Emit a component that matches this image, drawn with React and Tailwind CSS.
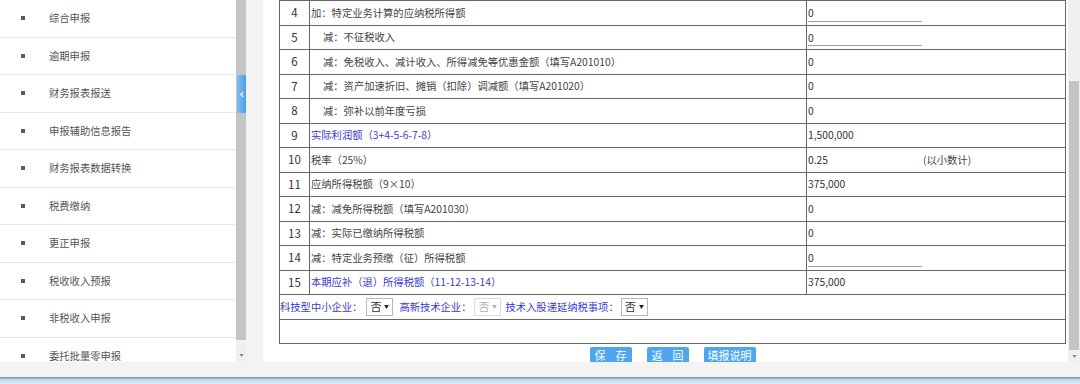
import React from "react";

const MENU = [
  "综合申报",
  "逾期申报",
  "财务报表报送",
  "申报辅助信息报告",
  "财务报表数据转换",
  "税费缴纳",
  "更正申报",
  "税收收入预报",
  "非税收入申报",
  "委托批量零申报",
];

const ROWS = [
  { n: 4, label: "加：特定业务计算的应纳税所得额", val: "0", input: true },
  { n: 5, label: "减：不征税收入", indent: true, val: "0", input: true },
  { n: 6, label: "减：免税收入、减计收入、所得减免等优惠金额（填写A201010）", indent: true, val: "0" },
  { n: 7, label: "减：资产加速折旧、摊销（扣除）调减额（填写A201020）", indent: true, val: "0" },
  { n: 8, label: "减：弥补以前年度亏损", indent: true, val: "0" },
  { n: 9, label: "实际利润额（3+4-5-6-7-8）", blue: true, val: "1,500,000" },
  { n: 10, label: "税率（25%）", val: "0.25", note: "(以小数计)" },
  { n: 11, label: "应纳所得税额（9×10）", val: "375,000" },
  { n: 12, label: "减：减免所得税额（填写A201030）", val: "0" },
  { n: 13, label: "减：实际已缴纳所得税额", val: "0" },
  { n: 14, label: "减：特定业务预缴（征）所得税额", val: "0", input: true },
  { n: 15, label: "本期应补（退）所得税额（11-12-13-14）", blue: true, val: "375,000" },
];

function DownArrow() {
  return (
    <svg viewBox="0 0 6 4" width="5" height="3">
      <path d="M0 0h6L3 4z" fill="#8a8a8a" />
    </svg>
  );
}

function SelectBox({ disabled }) {
  return (
    <span
      className={`inline-flex items-center gap-[3px] h-[18px] px-[3px] border bg-white ${
        disabled ? "border-[#dcdcdc] text-[#b0b0b0]" : "border-[#b8b8b8] text-[#333]"
      }`}
    >
      <span className="text-[11px] leading-none">否</span>
      <svg viewBox="0 0 6 5" width="5" height="4">
        <path d="M0 0h6L3 5z" fill={disabled ? "#b0b0b0" : "#222"} />
      </svg>
    </span>
  );
}

export default function App() {
  return (
    <div className="w-[1080px] h-[384px] overflow-hidden bg-[#f3f3f3] flex flex-col font-['Noto_Sans_CJK_SC','Liberation_Sans',sans-serif]">
      <div className="flex h-[362px] shrink-0">
        {/* Sidebar */}
        <aside className="relative flex w-[246px] shrink-0">
          <ul className="w-[236px] bg-white overflow-hidden">
            {MENU.map((m) => (
              <li key={m} className="flex items-center h-[37.5px] border-b border-[#e8e8e8]">
                <span className="ml-[21px] w-[4px] h-[4px] bg-[#5a5a5a]" />
                <span className="ml-[24px] text-[10.3px] leading-none text-[#555]">{m}</span>
              </li>
            ))}
          </ul>
          <div className="w-[10px] flex flex-col bg-[#f0f0f0]">
            <div className="h-[340px] bg-[#c4c4c4]" />
            <div className="flex-1 flex items-end justify-center pb-[5px]">
              <DownArrow />
            </div>
          </div>
          <div className="absolute left-[237px] top-[75px] w-[9px] h-[38px] rounded-l-[3px] bg-[linear-gradient(to_right,#7dbcf0,#4f9fe6)] flex items-center justify-center">
            <svg viewBox="0 0 5 8" width="4" height="7">
              <path d="M4 1L1 4l3 3" stroke="#fff" strokeWidth="1.5" fill="none" />
            </svg>
          </div>
        </aside>

        <div className="w-[17px] shrink-0" />

        {/* Main panel */}
        <main className="flex-1 bg-white flex overflow-hidden">
          <div className="flex-1 pl-[16px] pr-[2px] overflow-hidden">
            <div className="border-t border-l border-r border-[#666] text-[10.3px] leading-none">
              {ROWS.map((r) => (
                <div key={r.n} className="flex h-[24.5px] border-b border-[#666]">
                  <div className="w-[30px] shrink-0 border-r border-[#666] flex items-center justify-center text-[11.5px] text-[#333]">
                    {r.n}
                  </div>
                  <div
                    className={`w-[497px] shrink-0 border-r border-[#666] flex items-center ${
                      r.indent ? "pl-[13px]" : "pl-[1px]"
                    } ${r.blue ? "text-[#3a3ad2]" : "text-[#444]"}`}
                  >
                    {r.label}
                  </div>
                  <div className="flex-1 flex items-center pl-[1px] text-[#333]">
                    {r.input ? (
                      <span className="w-[114px] h-[16px] flex items-center border-b border-[#a0a0a0] mt-[2px]">
                        {r.val}
                      </span>
                    ) : (
                      <span className="w-[115px]">{r.val}</span>
                    )}
                    {r.note && <span className="text-[#444]">{r.note}</span>}
                  </div>
                </div>
              ))}
              <div className="flex items-center h-[24.5px] border-b border-[#666] text-[#3a3ad2]">
                <span>科技型中小企业：</span>
                <span className="ml-[4px]"><SelectBox /></span>
                <span className="ml-[6px]">高新技术企业：</span>
                <span className="ml-[3px]"><SelectBox disabled /></span>
                <span className="ml-[4px]">技术入股递延纳税事项：</span>
                <span className="ml-[2px]"><SelectBox /></span>
              </div>
              <div className="h-[24.5px] border-b border-[#666]" />
            </div>
            <div className="flex justify-center gap-[15px] mt-[3px] text-[11px] text-white leading-none">
              <button className="w-[42px] h-[16px] rounded-[2px] bg-[#4ea7ee] flex items-center justify-center gap-[10px]">
                <span>保</span>
                <span>存</span>
              </button>
              <button className="w-[42px] h-[16px] rounded-[2px] bg-[#4ea7ee] flex items-center justify-center gap-[10px]">
                <span>返</span>
                <span>回</span>
              </button>
              <button className="w-[52px] h-[16px] rounded-[2px] bg-[#4ea7ee] flex items-center justify-center">
                填报说明
              </button>
            </div>
          </div>
          <div className="w-[12px] shrink-0 bg-[#f0f0f0] flex flex-col">
            <div className="h-[81px]" />
            <div className="h-[269px] mx-[1px] bg-[#c4c4c4]" />
            <div className="flex-1 flex items-center justify-center">
              <DownArrow />
            </div>
          </div>
        </main>
      </div>

      <div className="h-[15px] shrink-0" />
      <div className="h-[7px] shrink-0 bg-[linear-gradient(to_bottom,#7f9cbd_0%,#7f9cbd_15%,#c3d6ea_35%,#e2ecf6_100%)]" />
    </div>
  );
}
